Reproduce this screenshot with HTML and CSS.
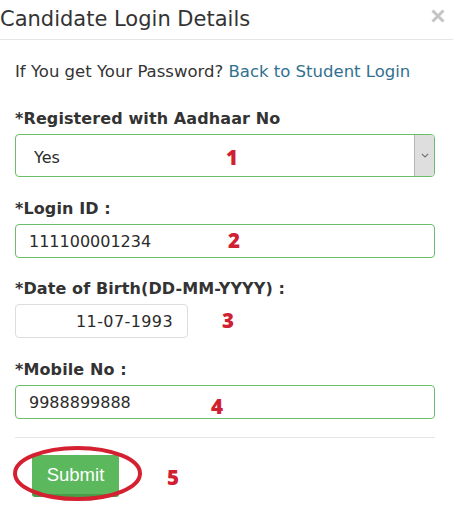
FILE: index.html
```html
<!DOCTYPE html>
<html>
<head>
<meta charset="utf-8">
<link rel="stylesheet" href="styles.css">
</head>
<body>
<div class="modal">
  <div class="header">
    <h4 class="title">Candidate Login Details</h4>
    <span class="close"><svg width="14" height="14" viewBox="0 0 14 14"><path d="M1.5 1.5 L12.5 12.5 M12.5 1.5 L1.5 12.5" stroke="#c4c4c4" stroke-width="3"/></svg></span>
  </div>
  <div class="body">
    <p class="info">If You get Your Password? <a class="link" href="#">Back to Student Login</a></p>
    <div class="group g1">
      <label class="lbl">*Registered with Aadhaar No</label>
      <div class="field select ok">
        <span class="val sel">Yes</span>
        <span class="mark m1">1</span>
        <span class="arrow"><svg width="8" height="5" viewBox="0 0 8 5"><path d="M0.8 0.8 L4 4 L7.2 0.8" fill="none" stroke="#707070" stroke-width="1.1"/></svg></span>
      </div>
    </div>
    <div class="group">
      <label class="lbl">*Login ID :</label>
      <div class="field text ok">
        <span class="val">111100001234</span>
        <span class="mark m2">2</span>
      </div>
    </div>
    <div class="group g3">
      <label class="lbl">*Date of Birth(DD-MM-YYYY) :</label>
      <div class="dobrow">
        <div class="field dob"><span class="val dobv">11-07-1993</span></div>
        <span class="mark m3">3</span>
      </div>
    </div>
    <div class="group">
      <label class="lbl">*Mobile No :</label>
      <div class="field text ok">
        <span class="val">9988899888</span>
        <span class="mark m4">4</span>
      </div>
    </div>
    <hr class="sep">
    <div class="footer">
      <div class="btnwrap">
        <button class="btn">Submit</button>
        <svg class="ring" width="132" height="58" viewBox="0 0 132 58"><ellipse cx="65.5" cy="27.5" rx="62.5" ry="25.5" fill="none" stroke="#d42030" stroke-width="4"/></svg>
      </div>
      <span class="mark m5">5</span>
    </div>
  </div>
</div>
</body>
</html>
```
FILE: styles.css
```css
html, body { margin: 0; padding: 0; background: #fff; }
body { font-family: "DejaVu Sans", Verdana, sans-serif; color: #333; width: 453px; height: 530px; overflow: hidden; }
.modal { width: 453px; }
.header { display: flex; justify-content: space-between; align-items: flex-start; height: 40px; border-bottom: 1px solid #e5e5e5; box-sizing: border-box; }
.title { margin: 0; padding: 6px 0 0 0; font-size: 21px; font-weight: normal; line-height: 26px; color: #333; }
.close { display: block; margin: 9px 8px 0 0; width: 14px; height: 14px; }
.close svg { display: block; }
.body { padding: 0 18px 0 15px; }
.info { margin: 21px 0 0 0; font-size: 16.5px; line-height: 22px; }
.link { color: #31708f; text-decoration: none; }
.group { margin-top: 22px; }
.g1 { margin-top: 26px; }
.g3 { margin-top: 21px; }
.lbl { display: block; font-weight: bold; font-size: 16px; line-height: 20px; margin: 0 0 5px 0; color: #333; letter-spacing: 0.1px; }
.field { box-sizing: border-box; border: 1px solid #ccc; border-radius: 4px; position: relative; display: flex; align-items: center; font-size: 16px; }
.ok { border-color: #6bbd6b; }
.select { height: 43px; width: 420px; padding-left: 18px; }
.sel { position: relative; top: 1.5px; }
.text { height: 34px; width: 420px; padding-left: 13px; }
.val { color: #2b2b2b; }
.dobv { letter-spacing: 0.4px; }
.arrow { position: absolute; right: 0; top: 0; bottom: 0; width: 19px; background: #dedede; border-left: 1px solid #b5b5b5; border-radius: 0 3px 3px 0; display: flex; align-items: center; justify-content: center; }
.mark { font-family: "Open Sans", sans-serif; font-weight: 800; font-size: 20.5px; color: #cf2131; line-height: 20px; }
.field .mark { position: absolute; }
.m1 { left: 210px; top: 12px; }
.m2 { left: 212px; top: 5px; }
.m4 { left: 195px; top: 10px; }
.dobrow { display: flex; align-items: flex-start; }
.dob { width: 173px; height: 34px; border-color: #ddd; justify-content: flex-end; padding-right: 14px; }
.m3 { margin-left: 34px; margin-top: 6px; }
.sep { border: 0; border-top: 1px solid #e5e5e5; margin: 18px 0 0 0; width: 420px; }
.footer { display: flex; align-items: flex-start; padding-top: 8px; }
.btnwrap { position: relative; width: 128px; height: 56px; }
.btn { position: absolute; left: 17px; top: 9px; width: 87px; height: 42px; background: #5cb85c; color: #fff; border: 0; border-bottom: 3px solid #4a9e4a; border-radius: 3px; font-family: "Liberation Sans", Arial, sans-serif; font-size: 18.5px; padding: 0; }
.ring { position: absolute; left: -3px; top: 0; }
.m5 { margin-left: 24px; margin-top: 21px; }
```
